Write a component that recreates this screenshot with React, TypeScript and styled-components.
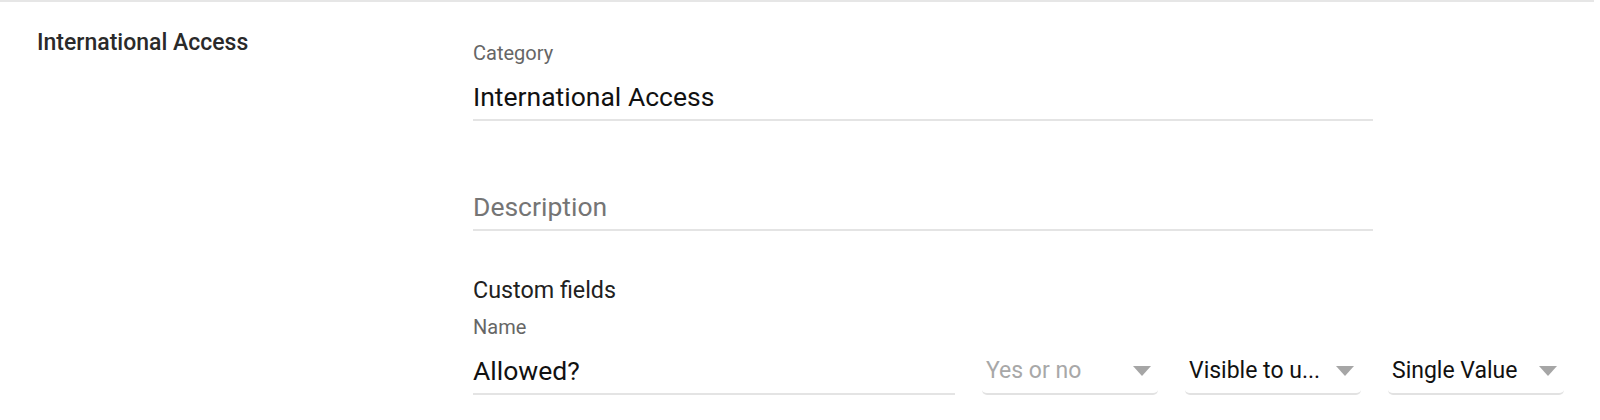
import styled, { createGlobalStyle } from "styled-components";

const GlobalStyle = createGlobalStyle`
  html, body {
    margin: 0;
    padding: 0;
    background: #fff;
    font-family: Roboto, "Liberation Sans", Arial, sans-serif;
  }
`;

const Page = styled.div`
  border-top: 2px solid #e6e6e6;
  margin-right: 6px;
`;

const Section = styled.section`
  display: grid;
  grid-template-columns: 436px 1fr;
  padding: 0 24px 0 37px;
`;

const SectionTitle = styled.h2`
  margin: 0;
  padding-top: 27px;
  font-size: 23px;
  line-height: 28px;
  font-weight: 500;
  color: #2a2a2a;
`;

const Fields = styled.div`
  display: flex;
  flex-direction: column;
  padding-top: 39px;
`;

const Field = styled.div<{ $width?: number }>`
  display: flex;
  flex-direction: column;
  width: ${(p) => (p.$width ? `${p.$width}px` : "auto")};
  flex: ${(p) => (p.$width ? "none" : "1")};
  margin-bottom: ${(p) => (p.$width ? "30px" : "0")};
`;

const Label = styled.label`
  font-size: 20px;
  line-height: 24px;
  color: #666;
  height: 24px;
  margin-bottom: 14px;
`;

const Input = styled.div<{ $placeholder?: boolean }>`
  font-size: 26.5px;
  line-height: 36px;
  padding-bottom: 4px;
  color: ${(p) => (p.$placeholder ? "#757575" : "#111")};
  border-bottom: 2px solid #e4e4e4;
`;

const SubHeading = styled.div`
  font-size: 23.3px;
  line-height: 28px;
  color: #212121;
  margin-top: 15px;
  margin-bottom: 11px;
`;

const FieldRow = styled.div`
  display: flex;
  align-items: flex-end;
  gap: 27px;
  width: 1091px;
`;

const Select = styled.div<{ $placeholder?: boolean }>`
  width: 176px;
  height: 44px;
  box-sizing: border-box;
  display: flex;
  align-items: flex-start;
  justify-content: space-between;
  padding: 2px 7px 4px 4px;
  border-bottom: 2px solid #e2e2e2;
  border-radius: 0 0 5px 5px;
  font-size: 23px;
  line-height: 36px;
  color: ${(p) => (p.$placeholder ? "#a8a8a8" : "#111")};
  white-space: nowrap;
`;

const Arrow = styled.span`
  width: 0;
  height: 0;
  margin-top: 13px;
  border-left: 9.5px solid transparent;
  border-right: 9.5px solid transparent;
  border-top: 10px solid #a6a6a6;
`;

const selects = [
  { text: "Yes or no", placeholder: true },
  { text: "Visible to u...", placeholder: false },
  { text: "Single Value", placeholder: false },
];

export default function App() {
  return (
    <>
      <GlobalStyle />
      <Page>
        <Section>
          <SectionTitle>International Access</SectionTitle>
          <Fields>
            <Field $width={900}>
              <Label>Category</Label>
              <Input>International Access</Input>
            </Field>
            <Field $width={900}>
              <Label />
              <Input $placeholder>Description</Input>
            </Field>
            <SubHeading>Custom fields</SubHeading>
            <FieldRow>
              <Field>
                <Label>Name</Label>
                <Input>Allowed?</Input>
              </Field>
              {selects.map((s) => (
                <Select key={s.text} $placeholder={s.placeholder}>
                  <span>{s.text}</span>
                  <Arrow />
                </Select>
              ))}
            </FieldRow>
          </Fields>
        </Section>
      </Page>
    </>
  );
}
